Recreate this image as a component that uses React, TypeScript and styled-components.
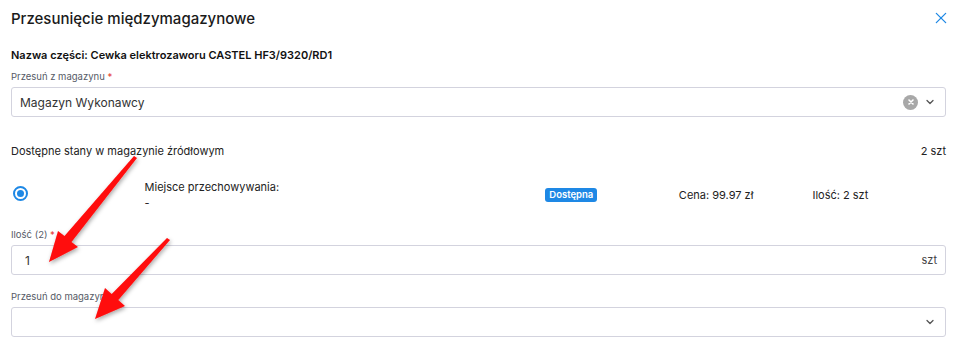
import React from 'react';
import styled, { createGlobalStyle } from 'styled-components';

const GlobalStyle = createGlobalStyle`
    body {
        margin: 0;
        background: #ffffff;
        font-family: Inter, "Noto Sans", sans-serif;
        color: #1c1c1c;
    }
`;

const Dialog = styled.div`
    position: relative;
    width: 958px;
    height: 362px;
    box-sizing: border-box;
    padding: 0 12px 0 11px;
    background: #ffffff;
    overflow: hidden;
`;

const Header = styled.div`
    display: flex;
    align-items: center;
    justify-content: space-between;
    height: 36px;
`;

const Title = styled.h2`
    margin: 0;
    font-size: 15px;
    font-weight: 500;
    color: #1a1a1a;
`;

const CloseButton = styled.button`
    border: none;
    background: none;
    padding: 0;
    margin-right: -2px;
    display: flex;
    cursor: pointer;
    color: #1e88e5;
`;

const PartName = styled.div`
    margin-top: 12px;
    font-size: 11px;
    font-weight: 600;
    color: #111;
`;

const Field = styled.div<{ $top: number }>`
    margin-top: ${p => p.$top}px;
`;

const Label = styled.div`
    font-size: 9.5px;
    color: #555a66;
    margin-bottom: 5px;

    span {
        color: #e53935;
    }
`;

const Box = styled.div`
    height: 30px;
    box-sizing: border-box;
    border: 1px solid #d3d3de;
    border-radius: 3px;
    display: flex;
    align-items: center;
    padding: 0 9px 0 8px;
    font-size: 12px;
    color: #333;
`;

const BoxValue = styled.div<{ $indent?: number }>`
    flex: 1;
    padding-left: ${p => p.$indent ?? 0}px;
`;

const Suffix = styled.span`
    font-size: 11px;
    color: #444;
    margin-right: -1px;
`;

const Icons = styled.div`
    display: flex;
    align-items: center;
    gap: 6px;
    color: #555;
`;

const Clear = styled.div`
    width: 15px;
    height: 15px;
    border-radius: 50%;
    background: #a8a8a8;
    display: flex;
    align-items: center;
    justify-content: center;
`;

const StockHeader = styled.div`
    display: flex;
    justify-content: space-between;
    margin-top: 27px;
    font-size: 11px;
    color: #222;
`;

const StockRow = styled.div`
    display: grid;
    grid-template-columns: repeat(7, 1fr);
    align-items: center;
    margin-top: 21px;
    height: 32px;
    font-size: 11px;
    color: #222;
`;

const Radio = styled.div`
    width: 15px;
    height: 15px;
    margin-left: 2px;
    margin-top: -3px;
    box-sizing: border-box;
    border: 2px solid #1e88e5;
    border-radius: 50%;
    display: flex;
    align-items: center;
    justify-content: center;

    &::after {
        content: '';
        width: 7px;
        height: 7px;
        border-radius: 50%;
        background: #1e88e5;
    }
`;

const Place = styled.div`
    grid-column: span 3;
    line-height: 16px;
`;

const Badge = styled.span`
    justify-self: start;
    background: #1e88e5;
    color: #fff;
    font-size: 9.5px;
    font-weight: 600;
    padding: 1px 4px 2px;
    border-radius: 3px;
`;

const Arrows = styled.svg`
    position: absolute;
    left: 0;
    top: 0;
    pointer-events: none;
`;

const Chevron = () => (
    <svg width="12" height="12" viewBox="0 0 24 24" fill="none" stroke="currentColor" strokeWidth="2.6" strokeLinecap="round" strokeLinejoin="round">
        <path d="m6 9 6 6 6-6" />
    </svg>
);

export default function App() {
    return (
        <Dialog>
            <GlobalStyle />
            <Header>
                <Title>Przesunięcie międzymagazynowe</Title>
                <CloseButton>
                    <svg width="14" height="14" viewBox="0 0 24 24" fill="none" stroke="currentColor" strokeWidth="2.2" strokeLinecap="round">
                        <path d="M4 4l16 16M20 4L4 20" />
                    </svg>
                </CloseButton>
            </Header>

            <PartName>Nazwa części: Cewka elektrozaworu CASTEL HF3/9320/RD1</PartName>

            <Field $top={9}>
                <Label>Przesuń z magazynu <span>*</span></Label>
                <Box>
                    <BoxValue>Magazyn Wykonawcy</BoxValue>
                    <Icons>
                        <Clear>
                            <svg width="8" height="8" viewBox="0 0 10 10" stroke="#fff" strokeWidth="2" strokeLinecap="round">
                                <path d="M2.5 2.5l5 5M7.5 2.5l-5 5" />
                            </svg>
                        </Clear>
                        <Chevron />
                    </Icons>
                </Box>
            </Field>

            <StockHeader>
                <span>Dostępne stany w magazynie źródłowym</span>
                <span>2 szt</span>
            </StockHeader>

            <StockRow>
                <Radio />
                <Place>
                    Miejsce przechowywania:
                    <br />
                    -
                </Place>
                <Badge>Dostępna</Badge>
                <span>Cena: 99.97 zł</span>
                <span>Ilość: 2 szt</span>
            </StockRow>

            <Field $top={18}>
                <Label>Ilość (2) <span>*</span></Label>
                <Box>
                    <BoxValue $indent={5}>1</BoxValue>
                    <Suffix>szt</Suffix>
                </Box>
            </Field>

            <Field $top={16}>
                <Label>Przesuń do magazynu</Label>
                <Box>
                    <BoxValue />
                    <Icons>
                        <Chevron />
                    </Icons>
                </Box>
            </Field>

            <Arrows width="958" height="362" viewBox="0 0 958 362">
                <defs>
                    <filter id="shadow" x="-20%" y="-20%" width="140%" height="140%">
                        <feDropShadow dx="1" dy="2" stdDeviation="2" floodColor="#000" floodOpacity="0.35" />
                    </filter>
                </defs>
                <g fill="#ff0a0a" filter="url(#shadow)">
                    <path d="M134 156 L137 158 L71.5 242 L78 247 L49 262 L58 231 L64.5 236 Z" />
                    <path d="M167 238 L170 240 L118.3 300 L125 306 L95 319 L105 288 L111.7 294 Z" />
                </g>
            </Arrows>
        </Dialog>
    );
}
